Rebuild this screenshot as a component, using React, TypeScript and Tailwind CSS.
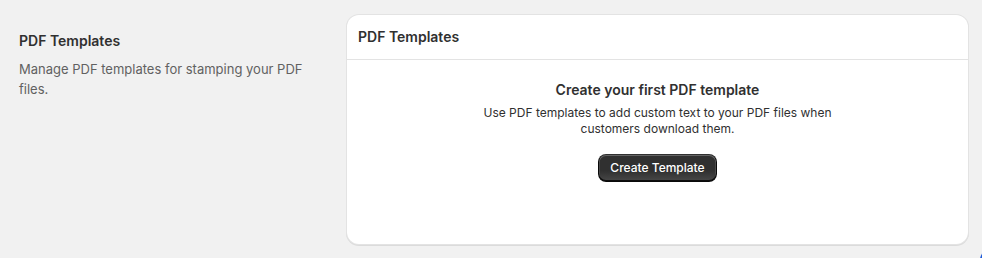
import React from 'react';

const font = { fontFamily: 'Inter, "Noto Sans", sans-serif' };

const SectionInfo = () => (
  <div className="w-[328px] shrink-0 pt-[16px] pr-[24px]">
    <h2 className="text-[14px] leading-5 font-semibold text-[#303030]">PDF Templates</h2>
    <p className="mt-2 text-[13px] leading-5 text-[#616161]">
      Manage PDF templates for stamping your PDF files.
    </p>
  </div>
);

const EmptyState = () => (
  <div className="flex flex-col items-center pt-5 pb-[62px] px-4 text-center">
    <h3 className="text-[14px] leading-5 font-semibold text-[#303030]">
      Create your first PDF template
    </h3>
    <p className="mt-[5px] max-w-[370px] text-[12px] leading-4 text-[#303030]">
      Use PDF templates to add custom text to your PDF files when customers download them.
    </p>
    <button className="mt-[17px] h-[28px] px-3 rounded-lg bg-[#303030] bg-gradient-to-b from-[#303030] from-60% to-[#4a4a4a] text-white text-[12px] font-medium shadow-[inset_0_-1px_0_1px_rgba(0,0,0,0.8),inset_0_0_0_1px_#303030,inset_0_0.5px_0_1.5px_rgba(255,255,255,0.25)]">
      Create Template
    </button>
  </div>
);

export default function App() {
  return (
    <div
      className="relative w-[982px] h-[258px] overflow-hidden bg-[#f1f1f1] flex pl-[19px] pr-[14px] pt-[15px]"
      style={font}
    >
      <SectionInfo />

      <div className="flex-1 self-start bg-white rounded-xl shadow-[0_0_0_1px_#e3e3e3,0_1px_0_1px_rgba(26,26,26,0.1)]">
        <div className="px-[11px] py-3 border-b border-[#e3e3e3]">
          <h2 className="text-[14px] leading-5 font-semibold text-[#303030]">PDF Templates</h2>
        </div>
        <EmptyState />
      </div>

      {/* chat launcher peeking in from the corner */}
      <div className="absolute left-[979px] top-[238px] w-14 h-14 rounded-full bg-[#1f5bd8]" />
    </div>
  );
}
